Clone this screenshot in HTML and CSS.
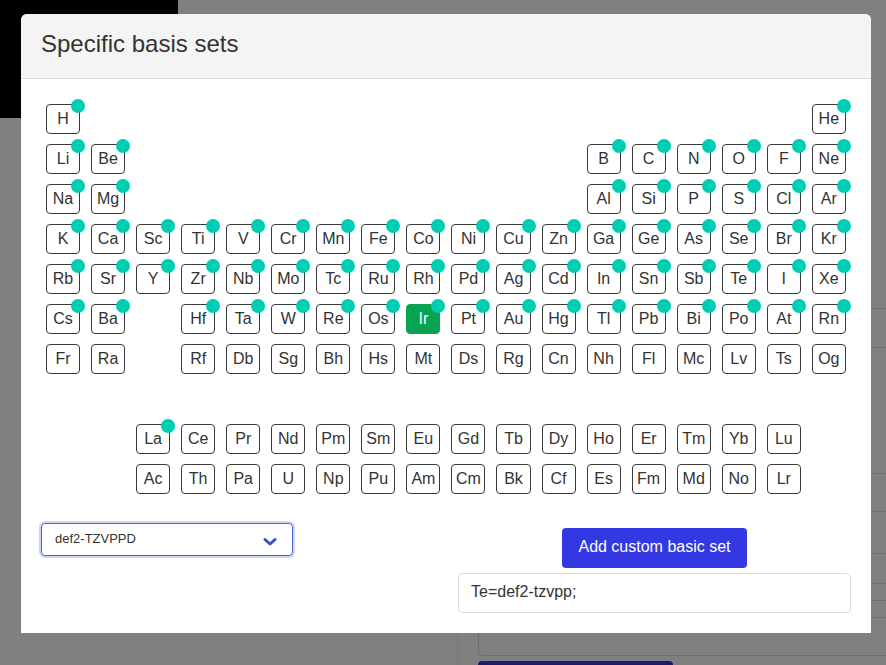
FILE: index.html
```html
<!DOCTYPE html>
<html>
<head>
<meta charset="utf-8">
<link rel="stylesheet" href="styles.css">
</head>
<body>
<div class="backdrop">
  <div class="bg-nav"></div>
  <div class="bg-panel"></div>
  <div class="bg-table">
    <div class="bg-line l1"></div>
    <div class="bg-line l2"></div>
    <div class="bg-line l3"></div>
    <div class="bg-line l4"></div>
    <div class="bg-line l5"></div>
    <div class="bg-line l6"></div>
    <div class="bg-line l7"></div>
    <div class="bg-box"></div>
    <div class="bg-btn"></div>
  </div>
</div>

<div class="modal">
  <div class="modal-header">
    <h2 class="modal-title">Specific basis sets</h2>
  </div>
  <div class="modal-body">
    <div class="ptable">
      <div class="el on">H</div><div class="sp16"></div><div class="el on">He</div>

      <div class="el on">Li</div><div class="el on">Be</div><div class="sp10"></div>
      <div class="el on">B</div><div class="el on">C</div><div class="el on">N</div><div class="el on">O</div><div class="el on">F</div><div class="el on">Ne</div>

      <div class="el on">Na</div><div class="el on">Mg</div><div class="sp10"></div>
      <div class="el on">Al</div><div class="el on">Si</div><div class="el on">P</div><div class="el on">S</div><div class="el on">Cl</div><div class="el on">Ar</div>

      <div class="el on">K</div><div class="el on">Ca</div><div class="el on">Sc</div><div class="el on">Ti</div><div class="el on">V</div><div class="el on">Cr</div><div class="el on">Mn</div><div class="el on">Fe</div><div class="el on">Co</div><div class="el on">Ni</div><div class="el on">Cu</div><div class="el on">Zn</div><div class="el on">Ga</div><div class="el on">Ge</div><div class="el on">As</div><div class="el on">Se</div><div class="el on">Br</div><div class="el on">Kr</div>

      <div class="el on">Rb</div><div class="el on">Sr</div><div class="el on">Y</div><div class="el on">Zr</div><div class="el on">Nb</div><div class="el on">Mo</div><div class="el on">Tc</div><div class="el on">Ru</div><div class="el on">Rh</div><div class="el on">Pd</div><div class="el on">Ag</div><div class="el on">Cd</div><div class="el on">In</div><div class="el on">Sn</div><div class="el on">Sb</div><div class="el on">Te</div><div class="el on">I</div><div class="el on">Xe</div>

      <div class="el on">Cs</div><div class="el on">Ba</div><div class="sp1"></div><div class="el on">Hf</div><div class="el on">Ta</div><div class="el on">W</div><div class="el on">Re</div><div class="el on">Os</div><div class="el on selected">Ir</div><div class="el on">Pt</div><div class="el on">Au</div><div class="el on">Hg</div><div class="el on">Tl</div><div class="el on">Pb</div><div class="el on">Bi</div><div class="el on">Po</div><div class="el on">At</div><div class="el on">Rn</div>

      <div class="el">Fr</div><div class="el">Ra</div><div class="sp1"></div><div class="el">Rf</div><div class="el">Db</div><div class="el">Sg</div><div class="el">Bh</div><div class="el">Hs</div><div class="el">Mt</div><div class="el">Ds</div><div class="el">Rg</div><div class="el">Cn</div><div class="el">Nh</div><div class="el">Fl</div><div class="el">Mc</div><div class="el">Lv</div><div class="el">Ts</div><div class="el">Og</div>

      <div class="sp18"></div>

      <div class="sp2"></div><div class="el on">La</div><div class="el">Ce</div><div class="el">Pr</div><div class="el">Nd</div><div class="el">Pm</div><div class="el">Sm</div><div class="el">Eu</div><div class="el">Gd</div><div class="el">Tb</div><div class="el">Dy</div><div class="el">Ho</div><div class="el">Er</div><div class="el">Tm</div><div class="el">Yb</div><div class="el">Lu</div><div class="sp1"></div>

      <div class="sp2"></div><div class="el">Ac</div><div class="el">Th</div><div class="el">Pa</div><div class="el">U</div><div class="el">Np</div><div class="el">Pu</div><div class="el">Am</div><div class="el">Cm</div><div class="el">Bk</div><div class="el">Cf</div><div class="el">Es</div><div class="el">Fm</div><div class="el">Md</div><div class="el">No</div><div class="el">Lr</div><div class="sp1"></div>
    </div>

    <div class="controls">
      <div class="left-col">
        <div class="select">
          <span class="select-value">def2-TZVPPD</span>
          <svg class="chev" width="14" height="10" viewBox="0 0 14 10"><polyline points="2,2.5 7,7 12,2.5" fill="none" stroke="#3f51c4" stroke-width="3" stroke-linecap="round" stroke-linejoin="round"/></svg>
        </div>
      </div>
      <div class="right-col">
        <button class="btn-add">Add custom basic set</button>
        <div class="text-input">Te=def2-tzvpp;</div>
      </div>
    </div>
  </div>
</div>
</body>
</html>
```

FILE: styles.css
```css
html, body {
  margin: 0;
  padding: 0;
}
body {
  width: 886px;
  height: 665px;
  overflow: hidden;
  position: relative;
  background: #808080;
  font-family: "Liberation Sans", Arial, sans-serif;
  color: #333;
}

/* dimmed page behind the overlay */
.backdrop {
  position: absolute;
  inset: 0;
  overflow: hidden;
}
.bg-nav {
  position: absolute;
  left: 0;
  top: 0;
  width: 178px;
  height: 118px;
  background: #000;
}
.bg-panel {
  position: absolute;
  left: 457px;
  top: 560px;
  width: 1px;
  height: 105px;
  background: #777;
}
.bg-table {
  position: absolute;
  left: 478px;
  top: 0;
  right: 0;
  bottom: 0;
  overflow: hidden;
}
.bg-line {
  position: absolute;
  left: 0;
  right: 0;
  height: 1px;
  background: #717171;
}
.l1 { top: 308px; }
.l2 { top: 347px; }
.l3 { top: 473px; }
.l4 { top: 511px; }
.l5 { top: 553px; }
.l6 { top: 583px; }
.l7 { top: 617px; }
.bg-box {
  position: absolute;
  left: 0;
  right: 0;
  top: 600px;
  height: 54px;
  border: 1px solid #6e6e6e;
  border-right: none;
  border-radius: 4px 0 0 4px;
}
.bg-btn {
  position: absolute;
  left: 0;
  top: 661px;
  width: 195px;
  height: 4px;
  border-radius: 4px 4px 0 0;
  background: #1a1c71;
}

/* modal */
.modal {
  position: absolute;
  left: 21px;
  top: 14px;
  width: 850px;
  background: #fff;
  border-radius: 6px 6px 0 0;
}
.modal-header {
  background: #f4f4f4;
  border-bottom: 1px solid #dcdcdc;
  border-radius: 6px 6px 0 0;
  padding: 15px 20px 20px;
}
.modal-title {
  margin: 0;
  font-size: 24px;
  line-height: 29px;
  font-weight: normal;
  color: #333;
}
.modal-body {
  padding: 20px;
}

.ptable {
  margin: 5px;
  display: grid;
  grid-template-columns: repeat(18, 34.06px);
  grid-auto-rows: 30px;
  gap: 10px 11px;
}
.sp1 { grid-column: span 1; }
.sp2 { grid-column: span 2; }
.sp10 { grid-column: span 10; }
.sp16 { grid-column: span 16; }
.sp18 { grid-column: span 18; }

.el {
  position: relative;
  box-sizing: border-box;
  border: 1px solid #3a3a3a;
  border-radius: 4px;
  font-size: 16px;
  line-height: 28px;
  text-align: center;
  color: #333;
  background: #fff;
}
.el.on::after {
  content: "";
  position: absolute;
  top: -6px;
  right: -6px;
  width: 14px;
  height: 14px;
  border-radius: 50%;
  background: #00ceb2;
  z-index: 2;
}
.el.selected {
  background: #06a451;
  border-color: #06a451;
  color: #fff;
}

.controls {
  margin-top: 29px;
  display: grid;
  grid-template-columns: 1fr 393px;
}
.select {
  box-sizing: border-box;
  width: 252px;
  height: 33px;
  border: 1px solid #4b61d1;
  border-radius: 4px;
  box-shadow: 0 0 0 2px #cfd6f4;
  padding: 0 15px 0 13px;
  display: flex;
  align-items: center;
  justify-content: space-between;
}
.select-value {
  font-size: 13px;
  color: #333;
  margin-top: -3px;
}
.chev {
  display: block;
  margin-top: 5px;
}
.right-col {
  display: flex;
  flex-direction: column;
  align-items: center;
}
.btn-add {
  margin-top: 5px;
  width: 185px;
  height: 40px;
  border: none;
  border-radius: 4px;
  background: #3338e3;
  color: #fff;
  font-family: "Liberation Sans", Arial, sans-serif;
  font-size: 16px;
  line-height: 38px;
  padding: 0 0 2px;
}
.text-input {
  margin-top: 5px;
  box-sizing: border-box;
  width: 393px;
  height: 40px;
  border: 1px solid #dcdcdc;
  border-radius: 4px;
  padding: 0 12px;
  font-size: 16px;
  line-height: 36px;
  color: #333;
}
```
